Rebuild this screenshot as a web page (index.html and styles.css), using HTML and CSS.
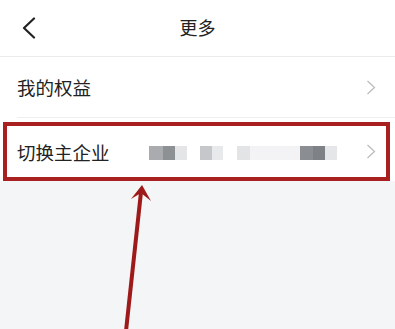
FILE: index.html
```html
<!DOCTYPE html>
<html lang="zh-CN">
<head>
    <meta charset="UTF-8">
    <meta name="viewport" content="width=device-width, initial-scale=1.0">
    <title>更多</title>
    <link rel="stylesheet" href="styles.css">
</head>
<body>
    <div class="page">
        <div class="header">
            <div class="back">
                <svg width="14" height="22" viewBox="0 0 14 22">
                    <polyline points="12,1.5 2,11 12,20.5" fill="none" stroke="#222" stroke-width="2.2" stroke-linecap="round" stroke-linejoin="round"/>
                </svg>
            </div>
            <div class="title">更多</div>
            <div></div>
        </div>

        <div class="list">
            <div class="row">
                <span class="label">我的权益</span>
                <svg class="arrow-right" width="10" height="15" viewBox="0 0 10 15">
                    <polyline points="1.5,1 8.5,7.5 1.5,14" fill="none" stroke="#bdbdbd" stroke-width="1.3"/>
                </svg>
            </div>
            <div class="row-wrap">
                <div class="row highlight">
                    <span class="label">切换主企业</span>
                    <div class="masked"></div>
                    <svg class="arrow-right" width="10" height="15" viewBox="0 0 10 15">
                        <polyline points="1.5,1 8.5,7.5 1.5,14" fill="none" stroke="#bdbdbd" stroke-width="1.3"/>
                    </svg>
                </div>
            </div>
        </div>

        <!-- annotation arrow -->
        <svg class="pointer" width="395" height="329" viewBox="0 0 395 329">
            <line x1="126" y1="331" x2="141" y2="192" stroke="#9e1a1a" stroke-width="4"/>
            <polygon points="142,185 131,199 141,193 151,201" fill="#9e1a1a"/>
        </svg>
    </div>
</body>
</html>
```

FILE: styles.css
```css
* {
    box-sizing: border-box;
    margin: 0;
    padding: 0;
}

body {
    font-family: "Noto Sans CJK SC", "Noto Sans", sans-serif;
    background-color: #f4f5f7;
    color: #222;
}

.page {
    position: relative;
    width: 395px;
    height: 329px;
    overflow: hidden;
}

.header {
    display: grid;
    grid-template-columns: 60px 1fr 60px;
    align-items: center;
    height: 57px;
    background: #fff;
    border-bottom: 1px solid #ebebeb;
}

.back {
    display: flex;
    padding-left: 22px;
    padding-bottom: 1px;
}

.title {
    text-align: center;
    font-size: 18px;
    line-height: 1;
    padding-bottom: 2px;
}

.list {
    background: #fff;
}

.row {
    display: flex;
    align-items: center;
    height: 61px;
    margin-left: 17px;
    padding-right: 19px;
    border-bottom: 1px solid #efefef;
}

.label {
    font-size: 18.5px;
    line-height: 1;
    padding-top: 1px;
}

.arrow-right {
    margin-left: auto;
}

.row-wrap {
    padding-top: 4px;
    background: #fff;
}

.row.highlight {
    height: 59px;
    margin: 0 5px 0 3px;
    padding-left: 10px;
    padding-right: 10px;
    border: 4px solid #a8201f;
}

.masked {
    width: 188px;
    height: 14px;
    margin-left: 39px;
    margin-top: 2px;
    filter: blur(0.6px);
    background: linear-gradient(to right,
        #a9abae 0, #a9abae 14px,
        #8e9194 14px, #8e9194 26px,
        #e4e5e7 26px, #e4e5e7 38px,
        #fff 38px, #fff 51px,
        #c5c7ca 51px, #c5c7ca 63px,
        #e8e9ea 63px, #e8e9ea 74px,
        #fff 74px, #fff 88px,
        #e3e4e6 88px, #e3e4e6 101px,
        #f3f3f5 101px, #f3f3f5 151px,
        #8a8d91 151px, #8a8d91 164px,
        #7e8185 164px, #7e8185 176px,
        #e5e6e8 176px, #e5e6e8 188px);
}

.pointer {
    position: absolute;
    left: 0;
    top: 0;
    pointer-events: none;
}
```
